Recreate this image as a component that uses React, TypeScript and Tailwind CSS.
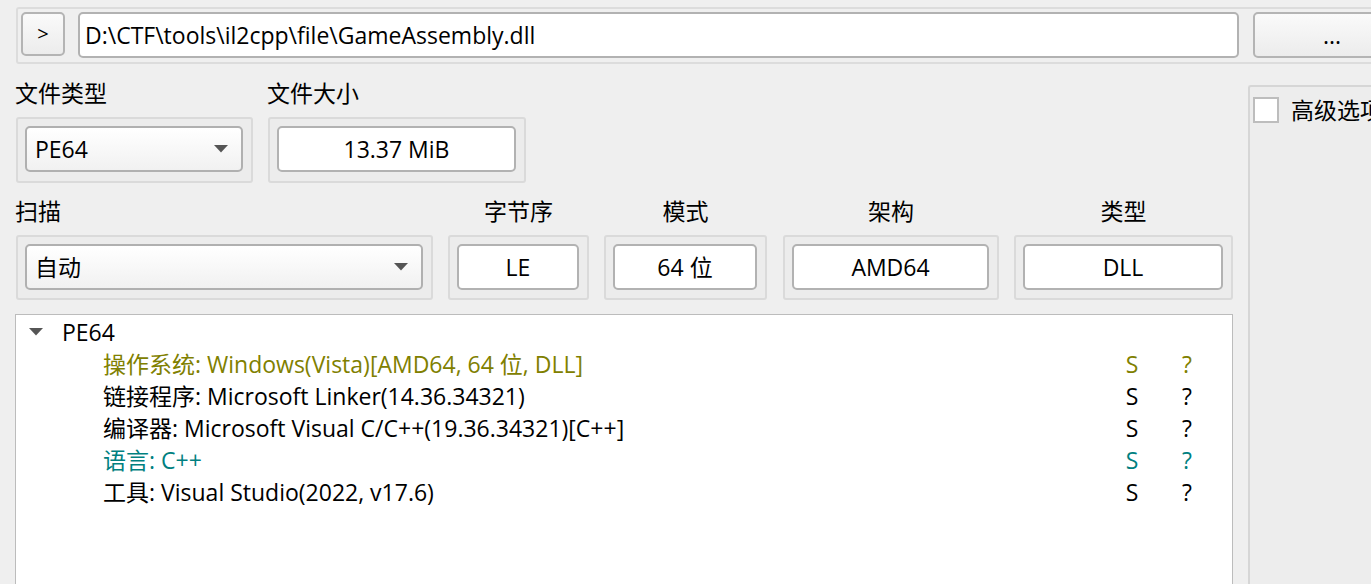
import React from "react";

const FONT = "font-['Open_Sans','Noto_Sans_CJK_SC',sans-serif]";

function Arrow() {
  return (
    <svg width="14" height="8" viewBox="0 0 14 8" className="shrink-0">
      <path d="M0 0 L14 0 L7 7.5 Z" fill="#555555" />
    </svg>
  );
}

function Frame({ children, className = "" }: { children: React.ReactNode; className?: string }) {
  return (
    <div className={`border-2 border-[#dadada] bg-[#ececec] rounded-[3px] pl-[7px] pr-[8px] ${className}`}>
      {children}
    </div>
  );
}

function ValueBox({ text }: { text: string }) {
  return (
    <div className="h-[46px] bg-white border-2 border-[#b2b2b2] rounded-[5px] flex items-center justify-center">
      {text}
    </div>
  );
}

function Combo({ text }: { text: string }) {
  return (
    <div className="h-[46px] bg-linear-to-b from-white to-[#f1f1f1] border-2 border-[#b0b0b0] rounded-[5px] flex items-center pl-[8px] pr-[13px]">
      <span className="flex-1">{text}</span>
      <Arrow />
    </div>
  );
}

type Row = { text: string; color: string };

const rows: Row[] = [
  { text: "操作系统: Windows(Vista)[AMD64, 64 位, DLL]", color: "text-[#808000]" },
  { text: "链接程序: Microsoft Linker(14.36.34321)", color: "text-black" },
  { text: "编译器: Microsoft Visual C/C++(19.36.34321)[C++]", color: "text-black" },
  { text: "语言: C++", color: "text-[#008080]" },
  { text: "工具: Visual Studio(2022, v17.6)", color: "text-black" },
];

export default function App() {
  return (
    <div className={`w-[1371px] h-[584px] overflow-hidden bg-[#efefef] text-black text-[23px] ${FONT} flex flex-col`}>
      {/* top path bar */}
      <div className="ml-[16px] mt-[7px] w-[1430px] h-[57px] shrink-0 border-2 border-[#dcdcdc] rounded-[3px] p-[3px] flex items-start">
        <div className="w-[44px] h-[44px] bg-linear-to-b from-[#fafafa] to-[#ececec] border-2 border-[#b4b4b4] rounded-[5px] flex items-center justify-center text-[20px]">
          &gt;
        </div>
        <div className="ml-[13px] w-[1161px] h-[46px] bg-white border-2 border-[#b2b2b2] rounded-[5px] flex items-center pl-[5px]">
          D:\CTF\tools\il2cpp\file\GameAssembly.dll
        </div>
        <div className="ml-[14px] w-[158px] h-[46px] bg-linear-to-b from-[#fafafa] to-[#ececec] border-2 border-[#b4b4b4] rounded-[5px] flex items-center justify-center">
          ...
        </div>
      </div>

      <div className="flex flex-1 min-h-0">
        {/* left column */}
        <div className="ml-[16px] w-[1217px] flex flex-col shrink-0">
          <div className="flex mt-[16px] gap-[15px]">
            <div className="w-[237px] flex flex-col">
              <div className="h-[30px] leading-[26px] -ml-[1px]">文件类型</div>
              <Frame className="mt-[7px] pt-[7px] pb-[9px]">
                <Combo text="PE64" />
              </Frame>
            </div>
            <div className="w-[258px] flex flex-col">
              <div className="h-[30px] leading-[26px] -ml-[1px]">文件大小</div>
              <Frame className="mt-[7px] pt-[7px] pb-[9px]">
                <ValueBox text="13.37 MiB" />
              </Frame>
            </div>
          </div>

          <div className="flex mt-[14px]">
            <div className="w-[417px] flex flex-col">
              <div className="h-[30px] leading-[28px] -ml-[1px]">扫描</div>
              <Frame className="mt-[8px] pt-[7px] pb-[8px]">
                <Combo text="自动" />
              </Frame>
            </div>
            <div className="ml-[15px] w-[141px] flex flex-col">
              <div className="h-[30px] leading-[28px] text-center">字节序</div>
              <Frame className="mt-[8px] pt-[7px] pb-[8px]">
                <ValueBox text="LE" />
              </Frame>
            </div>
            <div className="ml-[15px] w-[163px] flex flex-col">
              <div className="h-[30px] leading-[28px] text-center">模式</div>
              <Frame className="mt-[8px] pt-[7px] pb-[8px]">
                <ValueBox text="64 位" />
              </Frame>
            </div>
            <div className="ml-[16px] w-[216px] flex flex-col">
              <div className="h-[30px] leading-[28px] text-center">架构</div>
              <Frame className="mt-[8px] pt-[7px] pb-[8px]">
                <ValueBox text="AMD64" />
              </Frame>
            </div>
            <div className="ml-[15px] w-[219px] flex flex-col">
              <div className="h-[30px] leading-[28px] text-center">类型</div>
              <Frame className="mt-[8px] pt-[7px] pb-[8px]">
                <ValueBox text="DLL" />
              </Frame>
            </div>
          </div>

          {/* tree */}
          <div className="mt-[14px] -ml-[1px] w-[1218px] h-[300px] shrink-0 bg-white border border-[#bcbcbc] pt-[1px]">
            <div className="h-[32px] flex items-center">
              <div className="ml-[13px] w-[14px] flex items-center">
                <svg width="14" height="8" viewBox="0 0 14 8">
                  <path d="M0 0 L14 0 L7 7.5 Z" fill="#555555" />
                </svg>
              </div>
              <span className="ml-[19px]">PE64</span>
            </div>
            {rows.map((r) => (
              <div key={r.text} className={`h-[32px] flex items-center pl-[87px] pr-[30px] ${r.color}`}>
                <span className="flex-1 whitespace-nowrap">{r.text}</span>
                <span className="w-[30px] text-center">S</span>
                <span className="w-[25px]" />
                <span className="w-[30px] text-center">?</span>
              </div>
            ))}
          </div>
        </div>

        {/* right panel */}
        <div className="ml-[15px] mt-[21px] w-[200px] shrink-0 h-[600px] border-l-2 border-t-2 border-[#d6d6d6] rounded-tl-[3px] bg-[#ededed] pl-[3px] pt-[10px]">
          <div className="flex items-center">
            <div className="w-[26px] h-[26px] bg-white border-2 border-[#bdbdbd] shrink-0" />
            <span className="ml-[12px] whitespace-nowrap leading-[26px]">高级选项</span>
          </div>
        </div>
      </div>
    </div>
  );
}
